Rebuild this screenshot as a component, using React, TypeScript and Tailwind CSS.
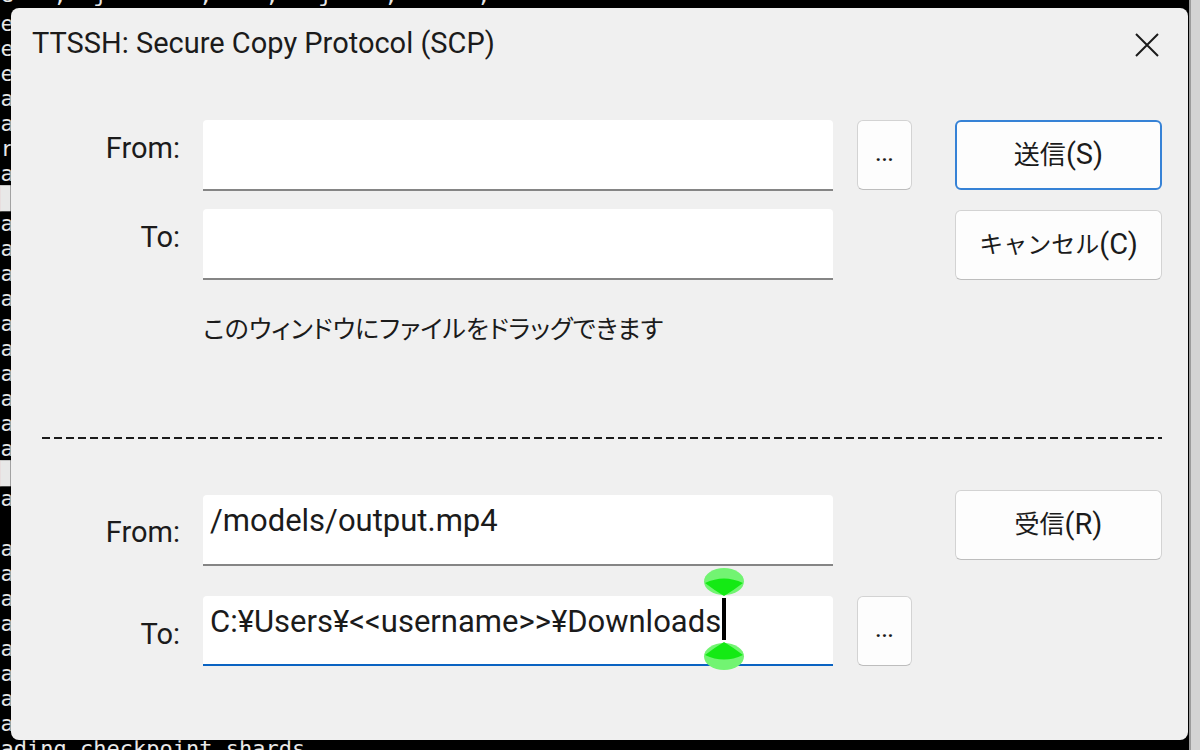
import React from "react";

// scrollback of the console that sits behind the dialog (only its edges show)
const termLines: string[] = [
  "Pre",
  "Cre",
  "Ree",
  "Loa",
  "Loa",
  "Par",
  "Loa",
  "███",
  "Loa",
  "Loa",
  "Loa",
  "Loa",
  "Loa",
  "Loa",
  "Loa",
  "Loa",
  "Loa",
  "Loa",
  "███",
  "Loa",
  "",
  "Loa",
  "Loa",
  "Loa",
  "Loa",
  "Loa",
  "Loa",
  "Loa",
  "Loa",
  "Loading checkpoint shards",
];

const Label = ({ text, pad }: { text: string; pad: string }) => (
  <div className={`w-[169px] text-right text-[29px] leading-[36px] ${pad}`}>{text}</div>
);

const Field = ({
  value,
  focused,
  children,
  height = "h-[71px]",
}: {
  value?: string;
  focused?: boolean;
  children?: React.ReactNode;
  height?: string;
}) => (
  <div
    className={`ml-[23px] flex w-[630px] items-start rounded-t-[4px] bg-white pl-[7px] pt-[8px] text-[31px] leading-[36px] ${height} ${
      focused ? "border-b-2 border-[#0a63c2]" : "border-b-2 border-[#858585]"
    }`}
  >
    {value && <span className="whitespace-pre">{value}</span>}
    {children}
  </div>
);

const Browse = () => (
  <button className="ml-[24px] flex h-[70px] w-[55px] items-center justify-center rounded-[6px] border border-[#d3d3d3] border-b-[#bdbdbd] bg-[#fdfdfd] pb-[4px] text-[22px] font-medium">
    ...
  </button>
);

const Handle = ({ flip }: { flip?: boolean }) => (
  <svg
    width="42"
    height="28"
    viewBox="0 0 42 28"
    className={`absolute left-[-19px] ${flip ? "top-[44px] rotate-180" : "top-[-30px]"}`}
  >
    <ellipse cx="21" cy="13.5" rx="20" ry="13.5" fill="#72f472" />
    <path d="M2 15 Q21 6 40 15 Q31 22 21 28 Q11 22 2 15Z" fill="#14ea14" />
  </svg>
);

const DialogButton = ({
  children,
  primary,
}: {
  children: React.ReactNode;
  primary?: boolean;
}) => (
  <button
    className={`flex h-[70px] w-[207px] items-center justify-center rounded-[6px] bg-[#fdfdfd] text-[29px] ${
      primary
        ? "border-2 border-[#3682d6]"
        : "border border-[#d3d3d3] border-b-[#bdbdbd]"
    }`}
  >
    {children}
  </button>
);

export default function App() {
  return (
    <div className="relative h-[750px] w-[1200px] overflow-hidden bg-black font-['Roboto','Noto_Sans_CJK_JP',sans-serif] text-[#1b1b1b]">
      <div className="flex h-full">
        <div className="flex-1 overflow-hidden">
          <pre className="ml-[-26px] mt-[-18px] font-['DejaVu_Sans_Mono',monospace] text-[22px] leading-[25px] text-[#e8e8e8]">
            <div className="h-[29px]">{"  e   ,  j       ,    ;   j    ,      ,"}</div>
            {termLines.map((l, i) => (
              <div key={i} className="h-[25px]">
                {l}
              </div>
            ))}
          </pre>
        </div>
        <div className="w-[11px] border-l-2 border-[#9c9c9c] bg-[#d4d4d4]" />
      </div>

      <div className="absolute left-[11px] top-[8px] flex h-[732px] w-[1177px] flex-col rounded-[8px] bg-[#f0f0f0] shadow-[0_0_0_1px_rgba(0,0,0,0.3)]">
        <div className="flex h-[72px] items-center justify-between pl-[21px] pr-[27px]">
          <span className="text-[29px]">TTSSH: Secure Copy Protocol (SCP)</span>
          <svg width="28" height="28" viewBox="0 0 28 28" className="mt-[2px]">
            <path d="M3 3 L25 25 M25 3 L3 25" stroke="#1b1b1b" strokeWidth="2" />
          </svg>
        </div>

        {/* send */}
        <div className="mt-[40px] flex">
          <div className="flex flex-col gap-[18px]">
            <div className="flex items-start">
              <Label text="From:" pad="pt-[10px]" />
              <Field />
              <Browse />
            </div>
            <div className="flex items-start">
              <Label text="To:" pad="pt-[10px]" />
              <Field />
            </div>
          </div>
          <div className="ml-[43px] flex flex-col gap-[20px]">
            <DialogButton primary>
              <span className="text-[26px]">送信</span>(S)
            </DialogButton>
            <DialogButton>
              <span className="text-[24px]">キャンセル</span>(C)
            </DialogButton>
          </div>
        </div>

        <div className="ml-[192px] mt-[32px] text-[25px] leading-[36px] [font-feature-settings:'palt']">
          このウィンドウにファイルをドラッグできます
        </div>

        <div className="ml-[31px] mr-[26px] mt-[89px] h-[2px] bg-[repeating-linear-gradient(90deg,#1b1b1b_0_8px,transparent_8px_12px)]" />

        {/* receive */}
        <div className="mt-[51px] flex">
          <div className="mt-[5px] flex flex-col gap-[30px]">
            <div className="flex items-start">
              <Label text="From:" pad="pt-[19px]" />
              <Field value="/models/output.mp4" />
            </div>
            <div className="flex items-start">
              <Label text="To:" pad="pt-[20px]" />
              <Field value="C:¥Users¥<<username>>¥Downloads" focused height="h-[70px]">
                <div className="relative ml-[1px] mt-[-6px] h-[42px] w-[4px] bg-black">
                  <Handle />
                  <Handle flip />
                </div>
              </Field>
              <Browse />
            </div>
          </div>
          <div className="ml-[43px]">
            <DialogButton>
              <span className="text-[25px]">受信</span>(R)
            </DialogButton>
          </div>
        </div>
      </div>
    </div>
  );
}
